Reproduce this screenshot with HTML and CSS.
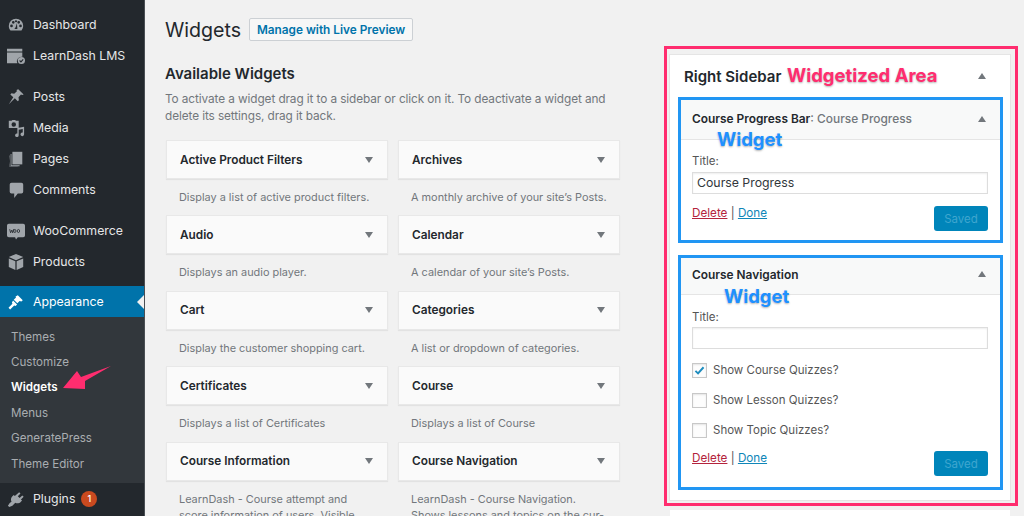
FILE: index.html
```html
<!DOCTYPE html>
<html lang="en">
<head>
<meta charset="utf-8">
<title>Widgets</title>
<link rel="stylesheet" href="styles.css">
</head>
<body>
<div class="admin">
  <nav class="menu">
    <a class="item"><svg class="ico" viewBox="0 0 20 20"><path d="M10 3a8 8 0 0 0-8 8c0 2 .7 3.700 1.900 5h12.200A8 8 0 0 0 18 11a8 8 0 0 0-8-8zM5 12.500a1.500 1.500 0 1 1 0-3 1.500 1.500 0 0 1 0 3zm2-4a1.500 1.500 0 1 1 0-3 1.500 1.500 0 0 1 0 3zm3-1.500a1.200 1.200 0 1 1 0-2.400A1.200 1.200 0 0 1 10 7zm1.500 7.500h-3c0-1 .4-1.500 1-1.800L11 8l.4 4.700c.1.500.1 1 .1 1.800zM15 12.500a1.500 1.500 0 1 1 0-3 1.500 1.500 0 0 1 0 3zm-2-4a1.500 1.500 0 1 1 0-3 1.500 1.500 0 0 1 0 3z"/></svg><span>Dashboard</span></a>
    <a class="item"><svg class="ico" viewBox="0 0 20 20"><path d="M0 2h17v3H0zM0 6h17v5a5 5 0 0 0-5.500 7H0z"/><circle cx="16" cy="15" r="4"/><path d="M14 15l1.500 1.500L18 13.800" fill="none" stroke="#23282d" stroke-width="1.200"/></svg><span>LearnDash LMS</span></a>
    <div class="sep"></div>
    <a class="item"><svg class="ico" viewBox="0 0 20 20"><path d="M12.500 1.500l6 5.700-1.600.6-1.400-.5-2.700 3.100.4 3.100-1.300 1.200-3.200-3.300L2 18l5-7.700-3.300-3.200 1.300-1.300 3 .6 3-2.900-.4-1.400z"/></svg><span>Posts</span></a>
    <a class="item"><svg class="ico" viewBox="0 0 20 20"><path d="M2 2h3l1-1h3l1 1h3v8H2zm5.500 1.500a2.500 2.500 0 1 0 0 5 2.500 2.500 0 0 0 0-5z" fill-rule="evenodd"/><path d="M19 8v8.500a2 2 0 1 1-1.500-1.900V10.500L13 11.500v6a2 2 0 1 1-1.500-1.900V9.500z" transform="translate(0 .5)"/></svg><span>Media</span></a>
    <a class="item"><svg class="ico" viewBox="0 0 20 20"><path d="M6 2h11v14H6z"/><path d="M4 4.500h1V17h9v1H4z"/><path d="M2.500 6H3v13h9v-.5H3.500z"/></svg><span>Pages</span></a>
    <a class="item"><svg class="ico" viewBox="0 0 20 20"><path d="M5 2h11a2 2 0 0 1 2 2v8a2 2 0 0 1-2 2h-4l-4 5v-5H5a2 2 0 0 1-2-2V4a2 2 0 0 1 2-2z"/></svg><span>Comments</span></a>
    <div class="sep"></div>
    <a class="item"><svg class="ico" viewBox="0 0 20 20"><path d="M2 2h16a2 2 0 0 1 2 2v11a2 2 0 0 1-2 2h-6l-2 2.500L9 17H2a2 2 0 0 1-2-2V4a2 2 0 0 1 2-2z"/><path d="M3 8l1 4 1.300-3 1 3 1-4M10 10a1.300 1.700 0 1 0-2.600 0 1.300 1.700 0 1 0 2.600 0M14 10a1.300 1.700 0 1 0-2.600 0 1.300 1.700 0 1 0 2.600 0" fill="none" stroke="#23282d" stroke-width=".9"/></svg><span>WooCommerce</span></a>
    <a class="item"><svg class="ico" viewBox="0 0 20 20"><path d="M10 1l8 3.500-8 3.500-8-3.500zM2 6l7.300 3.200V19L2 15.500zM18 6l-7.300 3.200V19l7.300-3.500z"/></svg><span>Products</span></a>
    <div class="sep sep-short"></div>
    <a class="item item-current"><svg class="ico" viewBox="0 0 20 20"><path d="M12 2.500l5.500 5.500-1.500 1.500-2-.5-2.500 2.500-4-4L10 5l-.5-1z"/><path d="M6.700 8.300l4.500 4.500-1.700 1.700L8 14l-4.500 4.200-1.800-1.800L6 12l-.5-1.500z"/></svg><span>Appearance</span></a>
    <div class="submenu">
      <a class="sub">Themes</a>
      <a class="sub">Customize</a>
      <a class="sub sub-current">Widgets</a>
      <a class="sub">Menus</a>
      <a class="sub">GeneratePress</a>
      <a class="sub">Theme Editor</a>
    </div>
    <a class="item"><svg class="ico" viewBox="0 0 20 20"><path d="M13.500 2.500l1.500 1.500-3 3 2 2 3-3 1.500 1.500-3 3 1.200 1.200-1.500 1.500c-1.800 1.800-4 2-6 1L6 17.500 2.500 19 1 17.500 3 14.500 5 13c-1-2-.8-4.200 1-6l1.500-1.500L8.700 6.700z"/></svg><span>Plugins</span><b class="badge">1</b></a>
  </nav>

  <main class="content">
    <section class="available">
      <header class="title-row">
        <h1>Widgets</h1>
        <a class="live">Manage with Live Preview</a>
      </header>
      <h2>Available Widgets</h2>
      <p class="intro">To activate a widget drag it to a sidebar or click on it. To deactivate a widget and delete its settings, drag it back.</p>
      <div class="grid">
        <div class="wcell"><div class="wcard"><span>Active Product Filters</span><i class="down"></i></div><p>Display a list of active product filters.</p></div>
        <div class="wcell"><div class="wcard"><span>Archives</span><i class="down"></i></div><p>A monthly archive of your site’s Posts.</p></div>
        <div class="wcell"><div class="wcard"><span>Audio</span><i class="down"></i></div><p>Displays an audio player.</p></div>
        <div class="wcell"><div class="wcard"><span>Calendar</span><i class="down"></i></div><p>A calendar of your site’s Posts.</p></div>
        <div class="wcell"><div class="wcard"><span>Cart</span><i class="down"></i></div><p>Display the customer shopping cart.</p></div>
        <div class="wcell"><div class="wcard"><span>Categories</span><i class="down"></i></div><p>A list or dropdown of categories.</p></div>
        <div class="wcell"><div class="wcard"><span>Certificates</span><i class="down"></i></div><p>Displays a list of Certificates</p></div>
        <div class="wcell"><div class="wcard"><span>Course</span><i class="down"></i></div><p>Displays a list of Course</p></div>
        <div class="wcell"><div class="wcard"><span>Course Information</span><i class="down"></i></div><p>LearnDash - Course attempt and<br>score information of users. Visible</p></div>
        <div class="wcell"><div class="wcard"><span>Course Navigation</span><i class="down"></i></div><p>LearnDash - Course Navigation.<br>Shows lessons and topics on the cur-</p></div>
      </div>
    </section>

    <aside class="area-col">
      <div class="area-mark">
        <div class="area">
          <div class="area-head"><span>Right Sidebar</span><i class="up"></i></div>
          <div class="widget">
            <div class="widget-head"><span><b>Course Progress Bar</b>: Course Progress</span><i class="up"></i></div>
            <div class="widget-body">
              <label class="lbl">Title:</label>
              <div class="field">Course Progress</div>
              <div class="actions"><span class="links"><a class="del">Delete</a> | <a class="done">Done</a></span><a class="saved">Saved</a></div>
            </div>
          </div>
          <div class="widget widget-nav">
            <div class="widget-head"><span><b>Course Navigation</b></span><i class="up"></i></div>
            <div class="widget-body">
              <label class="lbl">Title:</label>
              <div class="field"></div>
              <div class="check first"><span class="box"><svg viewBox="0 0 16 16"><path d="M3 8.500l3.200 3L13 4" fill="none" stroke="#1e8cbe" stroke-width="2.400"/></svg></span>Show Course Quizzes?</div>
              <div class="check"><span class="box"></span>Show Lesson Quizzes?</div>
              <div class="check"><span class="box"></span>Show Topic Quizzes?</div>
              <div class="actions"><span class="links"><a class="del">Delete</a> | <a class="done">Done</a></span><a class="saved">Saved</a></div>
            </div>
          </div>
        </div>
      </div>
      <div class="next-area"></div>
    </aside>
  </main>
</div>

<svg class="arrow" viewBox="0 0 1024 516"><path d="M63 388L77 371 81 377 111 366 85 381 85 389z"/></svg>
<span class="note note-pink note-area">Widgetized Area</span>
<span class="note note-blue note-w1">Widget</span>
<span class="note note-blue note-w2">Widget</span>
</body>
</html>
```
FILE: styles.css
```css
* { box-sizing: border-box; }
html, body { margin: 0; height: 516px; overflow: hidden; }
body {
  position: relative;
  background: #f1f1f1;
  color: #444;
  font-family: Inter, Roboto, "Liberation Sans", sans-serif;
  font-size: 12px;
}
p, h1, h2 { margin: 0; font-weight: normal; }
.admin { display: flex; height: 516px; }

/* left menu */
.menu {
  flex: 0 0 145px;
  height: 516px;
  padding-top: 9px;
  background: #23282d;
  border-right: 1px solid #4a4f54;
  display: flex;
  flex-direction: column;
  overflow: hidden;
}
.item {
  flex: 0 0 31px;
  display: flex;
  align-items: center;
  padding-left: 7px;
  color: #e6e7e8;
  font-size: 12.300px;
  position: relative;
}
.ico { width: 18px; height: 18px; fill: #a0a5aa; margin-right: 8px; flex: none; }
.sep { flex: 0 0 10px; }
.sep-short { flex-basis: 9px; }
.item-current { background: #0073aa; color: #fff; }
.item-current .ico { fill: #fff; }
.item-current::after {
  content: "";
  position: absolute;
  right: 0;
  top: 9px;
  border: 7px solid transparent;
  border-right-color: #f1f1f1;
  border-left-width: 0;
}
.submenu {
  flex: 0 0 166px;
  padding-top: 7px;
  background: #32373c;
  display: flex;
  flex-direction: column;
}
.sub {
  flex: 0 0 25.400px;
  display: flex;
  align-items: center;
  padding-left: 11px;
  color: #a9adb1;
  font-size: 11.600px;
}
.sub-current { color: #fff; font-weight: 600; }
.badge {
  width: 16px;
  height: 16px;
  margin-left: 6px;
  border-radius: 50%;
  background: #ca4a1f;
  color: #fff;
  font-size: 9px;
  font-weight: 500;
  text-align: center;
  line-height: 16px;
}

/* main */
.content { flex: 1; display: flex; min-width: 0; }
.available { flex: 0 0 519px; padding: 18px 0 0 20px; }
.title-row { display: flex; align-items: center; height: 23px; gap: 8px; }
h1 { font-size: 19.600px; color: #23282d; }
.live {
  height: 23px;
  width: 164px;
  border: 1px solid #ccd0d4;
  border-radius: 2px;
  background: #f7f7f7;
  color: #0073aa;
  font-size: 11.800px;
  font-weight: 600;
  display: flex;
  align-items: center;
  justify-content: center;
}
h2 { margin-top: 23px; font-size: 15px; font-weight: 600; color: #23282d; line-height: 20px; }
.intro { margin-top: 7px; width: 450px; line-height: 17px; color: #72777c; font-size: 11.800px; letter-spacing: -.09px; }
.grid {
  margin: 15px 0 0 1px;
  width: 454px;
  display: grid;
  grid-template-columns: 222px 222px;
  column-gap: 10px;
  grid-auto-rows: 75.400px;
}
.wcard {
  height: 39px;
  padding: 0 14px 0 13px;
  background: #fafafa;
  box-shadow: 0 1px 1px rgba(0, 0, 0, .06);
  border: 1px solid #e8e8e8;
  display: flex;
  align-items: center;
  justify-content: space-between;
  color: #23282d;
  font-weight: 600;
  font-size: 11.800px;
}
.wcell p { margin: 10px 0 0 13px; line-height: 16px; color: #72777c; font-size: 10.900px; white-space: nowrap; }
.down, .up { width: 0; height: 0; border: 4.500px solid transparent; border-bottom: 0; border-top: 6px solid #72777c; flex: none; }
.up { border-top: 0; border-bottom: 6px solid #72777c; }

/* widget area */
.area-col { padding-top: 46px; width: 354px; }
.area-mark { height: 460px; border: 3px solid #ff2d6f; padding: 6px 5px 0 3px; }
.area { height: 445px; background: #fff; box-shadow: 0 0 0 1px #e5e5e5; padding: 0 5px 0 8px; }
.area-head {
  height: 42px;
  padding: 0 19px 0 6px;
  display: flex;
  align-items: center;
  justify-content: space-between;
  font-size: 15px;
  font-weight: 600;
  color: #23282d;
}
.widget { border: 3px solid #2196f3; background: #fff; width: 325px; height: 146px; }
.widget-nav { margin-top: 12px; height: 235px; }
.widget-head {
  height: 40px;
  padding: 0 14px 2px 11px;
  background: #f8f9f9;
  border-bottom: 1px solid #e5e5e5;
  display: flex;
  align-items: center;
  justify-content: space-between;
  color: #72777c;
  font-weight: 500;
  font-size: 11.900px;
}
.widget-head b { color: #23282d; font-weight: 600; }
.widget-body { padding: 13px 12px 0 11px; }
.widget-nav .widget-head { height: 37px; padding-bottom: 4px; }
.widget-nav .widget-body { padding-top: 14px; }
.lbl { display: block; color: #555; font-size: 11.500px; line-height: 16px; }
.field {
  height: 22px;
  margin-top: 3px;
  border: 1px solid #ddd;
  box-shadow: inset 0 1px 2px rgba(0, 0, 0, .07);
  padding-left: 4px;
  line-height: 20px;
  color: #32373c;
  font-size: 12.300px;
}
.widget-nav .field { margin-top: 2px; }
.actions { margin-top: 12px; display: flex; justify-content: space-between; align-items: flex-start; font-size: 11.700px; color: #555; }
.check + .actions { margin-top: 6px; }
.del { color: #b4233c; text-decoration: underline; }
.done { color: #0f86b8; text-decoration: underline; }
.saved {
  width: 54px;
  height: 25px;
  border-radius: 3px;
  background: #0085ba;
  color: #3fa6cf;
  display: flex;
  align-items: center;
  justify-content: center;
  font-size: 11.500px;
}
.check { display: flex; align-items: center; height: 30px; font-size: 11.500px; color: #555; }
.check.first { margin-top: 6px; }
.box {
  width: 15px;
  height: 15px;
  margin-right: 6px;
  border: 1px solid #c8c8c8;
  background: #fdfdfd;
  box-shadow: inset 0 1px 2px rgba(0, 0, 0, .1);
  flex: none;
}
.box svg { display: block; width: 13px; height: 13px; }
.next-area { height: 6px; margin: 4px 8px 0 6px; background: #fff; }

/* annotations */
.arrow { position: absolute; left: 0; top: 0; width: 1024px; height: 516px; fill: #ff2d6f; pointer-events: none; }
.note { position: absolute; font-weight: 700; white-space: nowrap; text-shadow: 0 1px 2px rgba(0, 0, 0, .3); }
.note-pink { color: #ff2d6f; }
.note-blue { color: #1e90ff; }
.note-area { left: 787px; top: 64px; font-size: 18.500px; }
.note-w1 { left: 717px; top: 128px; font-size: 18.500px; }
.note-w2 { left: 724px; top: 285px; font-size: 18.500px; }
```
